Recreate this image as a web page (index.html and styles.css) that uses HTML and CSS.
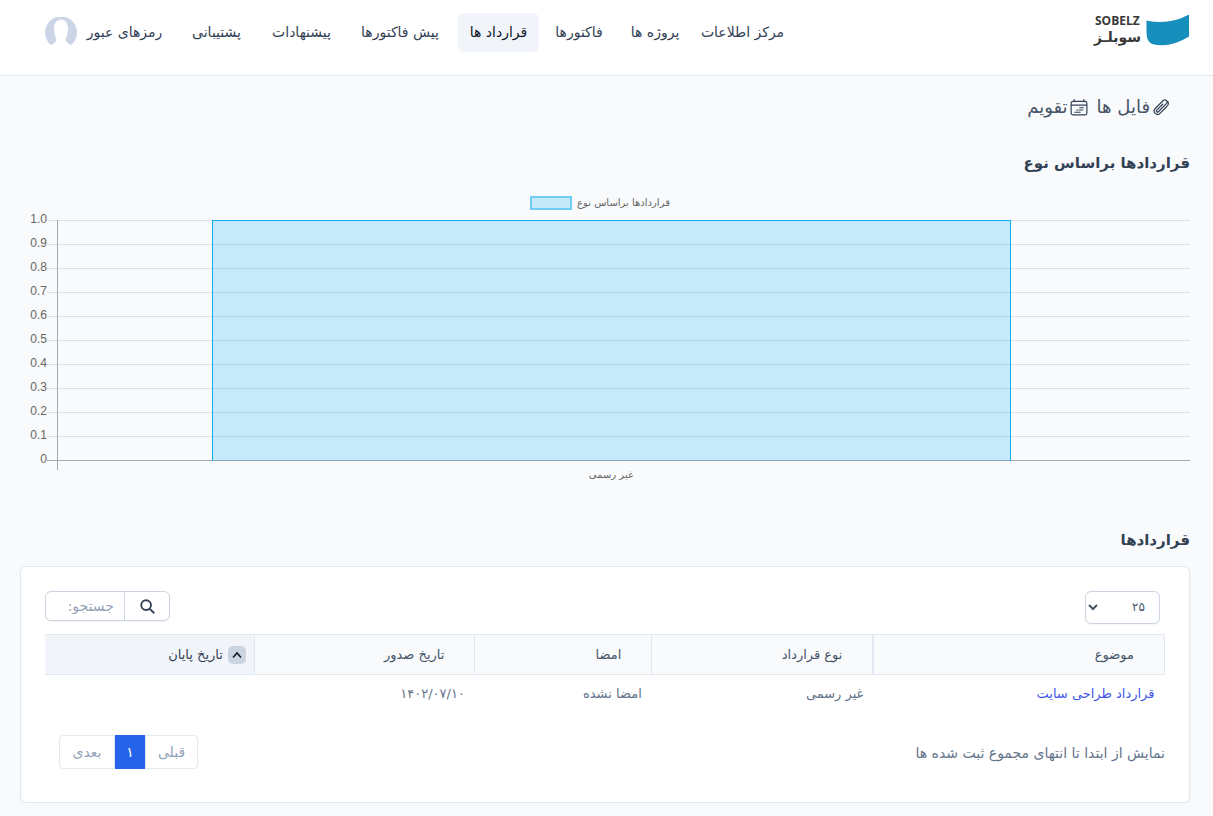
FILE: index.html
```html
<!DOCTYPE html>
<html lang="fa" dir="rtl">
<head>
<meta charset="utf-8">
<meta name="viewport" content="width=device-width, initial-scale=1">
<title>قراردادها</title>
<link rel="stylesheet" href="styles.css">
</head>
<body>
<header class="topbar">
  <a class="logo" href="#" aria-label="SOBELZ">
    <svg class="logo-mark" viewBox="0 0 44 32" aria-hidden="true"><path d="M.5 7Q23 12 43 1V23Q24 35 6 30.500Q.5 28 .5 19Z" fill="#178fbd"/></svg>
    <span class="logo-text"><span class="logo-en">SOBELZ</span><span class="logo-fa">سوبلـز</span></span>
  </a>
  <nav class="nav">
    <a class="nav-link w-95" href="#">مرکز اطلاعات</a>
    <a class="nav-link w-72" href="#">پروژه ها</a>
    <a class="nav-link w-72" href="#">فاکتورها</a>
    <a class="nav-link w-81 active" href="#">قرارداد ها</a>
    <a class="nav-link w-108" href="#">پیش فاکتورها</a>
    <a class="nav-link w-81" href="#">پیشنهادات</a>
    <a class="nav-link w-81" href="#">پشتیبانی</a>
    <a class="nav-link w-95" href="#">رمزهای عبور</a>
  </nav>
  <button class="avatar" aria-label="حساب کاربری">
    <svg viewBox="0 0 32 32" aria-hidden="true"><path d="M6 28A16 16 0 1 1 26 28Q21 26 20.500 22Q23 18 23 12Q23 7 20 4Q16 1 12 4Q9 6 9 12Q9 18 11.500 22Q11 26 6 28Z" fill="#cbd5e6"/></svg>
  </button>
</header>
<main class="page">
  <div class="quick">
    <a class="quick-link" href="#"><svg viewBox="0 0 24 24" aria-hidden="true"><path d="m18.400 12.700-7.700 7.700a4.500 4.500 0 0 1-6.400-6.400L15.300 3.100a3 3 0 0 1 4.200 4.200L8.600 18.300a1.500 1.500 0 0 1-2.200-2.100l7.900-7.900m4.100 4.400 2.300-2.400a5 5 0 0 0 .4-5.500"/></svg>فایل ها</a>
    <a class="quick-link" href="#"><svg viewBox="0 0 24 24" aria-hidden="true"><path d="M5.500 2v3M18.500 2v3M1.500 9.500h21M4 4.500h16A2.500 2.500 0 0 1 22.500 7v13a2.500 2.500 0 0 1-2.500 2.500H4A2.500 2.500 0 0 1 1.500 20V7A2.500 2.500 0 0 1 4 4.500ZM13 13h5M9 16h1m2 0h5M6.500 19h7"/></svg>تقویم</a>
  </div>
  <h2 class="title">قراردادها براساس نوع</h2>
  <figure class="chart" dir="ltr">
    <figcaption class="legend"><span class="swatch"></span><span dir="rtl">قراردادها براساس نوع</span></figcaption>
    <div class="plot">
      <div class="ticks"><span>1.0</span><span>0.9</span><span>0.8</span><span>0.7</span><span>0.6</span><span>0.5</span><span>0.4</span><span>0.3</span><span>0.2</span><span>0.1</span><span>0</span></div>
      <div class="lines"><i></i><i></i><i></i><i></i><i></i><i></i><i></i><i></i><i></i><i></i><i class="base"></i></div>
      <div class="area"><div class="bar"></div></div>
    </div>
    <div class="category" dir="rtl">غیر رسمی</div>
  </figure>
  <h2 class="title">قراردادها</h2>
  <section class="card">
    <div class="tools">
      <select class="length" aria-label="تعداد ردیف"><option>۲۵</option></select>
      <div class="search">
        <button class="search-btn" aria-label="جستجو"><svg viewBox="0 0 16 16" aria-hidden="true"><circle cx="6.500" cy="6.500" r="5.200"/><path d="m10.200 10.200 5 5"/></svg></button>
        <input class="search-input" type="search" placeholder="جستجو:" aria-label="جستجو">
      </div>
    </div>
    <table class="table">
      <thead><tr><th class="c-subject">موضوع</th><th class="c-type">نوع قرارداد</th><th class="c-sign">امضا</th><th class="c-date">تاریخ صدور</th><th class="sorted"><span class="sort-label"><svg class="sort" viewBox="0 0 18 18" aria-hidden="true"><rect width="18" height="18" rx="5" fill="#cbd5e1"/><path d="m5 11.500 4-4.500 4 4.500" fill="none" stroke="#0f172a" stroke-width="1.600"/></svg>تاریخ پایان</span></th></tr></thead>
      <tbody><tr><td><a class="link" href="#">قرارداد طراحی سایت</a></td><td>غیر رسمی</td><td>امضا نشده</td><td>۱۴۰۲/۰۷/۱۰</td><td></td></tr></tbody>
    </table>
    <div class="foot">
      <p class="info">نمایش از ابتدا تا انتهای مجموع ثبت شده ها</p>
      <div class="pager"><button class="page-btn">قبلی</button><button class="page-btn current">۱</button><button class="page-btn">بعدی</button></div>
    </div>
  </section>
</main>
</body>
</html>
```
FILE: styles.css
```css
* { box-sizing: border-box; }
body { margin: 0; background: #f8fafc; color: #475569; font: 13px/20px "DejaVu Sans", sans-serif; }
a { color: inherit; text-decoration: none; }
button, input, select { font: inherit; color: inherit; margin: 0; }
.topbar { display: flex; align-items: flex-start; height: 76px; padding: 13px 23px 0 45px; background: #fff; border-bottom: 1px solid #e2e8f0; }
.logo { display: flex; gap: 5px; align-items: flex-start; margin-inline-end: auto; }
.logo-mark { width: 44px; height: 33px; }
.logo-text { display: flex; flex-direction: column; width: 46px; color: #383838; font-weight: 700; text-align: right; white-space: nowrap; }
.logo-en { font: 700 12px/16px "Open Sans", sans-serif; direction: ltr; text-align: left; }
.logo-fa { font-size: 14px; line-height: 16px; }
.nav { display: flex; gap: 4px; font-size: 14px; }
.nav-link { padding: 9px 0 10px; border-radius: 6px; text-align: center; white-space: nowrap; color: #334155; }
.nav-link.active { background: #f1f5f9; color: #0f172a; }
.w-72 { width: 72px; }
.w-81 { width: 81px; }
.w-95 { width: 95px; }
.w-108 { width: 108px; }
.avatar { width: 32px; height: 32px; margin-top: 4px; padding: 0; border: 0; background: none; }
.avatar svg { display: block; }
.page { padding: 18px 23px 0 20px; }
.quick { display: flex; gap: 9px; padding-inline-start: 20px; font-size: 18px; line-height: 26px; }
.quick-link { display: flex; align-items: center; gap: 2px; }
.quick-link svg { width: 18px; height: 18px; fill: none; stroke: #334155; stroke-width: 1.600; stroke-linecap: round; }
.title { margin: 29px 0 0; color: #334155; font-size: 15px; font-weight: 700; line-height: 28px; }
.chart { margin: 18px 0 43px; color: #666; font-size: 10px; }
.legend { display: flex; justify-content: center; align-items: center; gap: 5px; height: 16px; margin-right: 10px; }
.swatch { width: 42px; height: 14px; border: 2px solid #71cdf5; background: #c6e9f9; }
.plot { display: grid; grid-template-columns: 27px 10px 1fr; margin-top: 9px; }
.ticks { grid-area: 1 / 1; margin-top: -13px; font: 12px/24px "Liberation Sans", Arial, sans-serif; text-align: right; }
.ticks span { display: block; }
.lines { grid-area: 1 / 2 / 2 / 4; }
.lines i { display: block; height: 24px; border-top: 1px solid #dfe1e3; }
.lines .base { height: 1px; border-color: #a5a7a8; }
.area { grid-area: 1 / 3; height: 250px; padding: 0 15.800% 9px 13.600%; border-left: 1px solid #a5a7a8; }
.bar { height: 100%; border: solid #0caeef; border-width: 1px 1px 0; background: rgba(3, 169, 244, .2); }
.category { padding-left: 12px; line-height: 16px; text-align: center; margin-top: -4px; }
.card { margin-top: 12px; padding: 24px; background: #fff; border: 1px solid #e2e8f0; border-radius: 6px; box-shadow: 0 1px 2px rgba(0, 0, 0, .05); }
.tools { display: flex; justify-content: space-between; align-items: flex-start; padding-inline-start: 5px; }
.length { width: 75px; height: 33px; padding: 0 10px 2px 4px; border: 1px solid #cbd5e1; border-radius: 6px; background: #fff; font-size: 12px; box-shadow: 0 1px 2px rgba(0, 0, 0, .05); }
.search { display: flex; width: 125px; height: 30px; border: 1px solid #cbd5e1; border-radius: 6px; background: #fff; box-shadow: 0 1px 2px rgba(0, 0, 0, .05); }
.search-btn { width: 45px; padding: 0; border: 0; border-left: 1px solid #cbd5e1; background: none; }
.search-btn svg { display: block; width: 15px; height: 15px; margin: 0 auto; fill: none; stroke: #334155; stroke-width: 2; }
.search-input { flex: 1; min-width: 0; padding: 0 10px 0 0; border: 0; background: none; outline: 0; font-size: 14px; appearance: none; }
.search-input::-webkit-search-cancel-button { display: none; }
.search-input::placeholder { color: #94a3b8; opacity: 1; }
.table { width: 100%; margin-top: 10px; border-collapse: collapse; table-layout: fixed; }
th { height: 40px; padding: 0 30px; border: 1px solid #e2e8f0; background: #f8fafc; color: #475569; font-weight: 400; text-align: right; }
th.sorted { padding: 0 8px; border-left: 0; background: #f1f5f9; color: #334155; }
.c-subject { width: 26%; border-left-width: 2px; }
.c-type { width: 19.800%; }
.c-sign { width: 15.800%; }
.c-date { width: 19.700%; }
.sort-label { display: flex; align-items: center; gap: 5px; }
.sort { width: 18px; height: 18px; }
td { height: 38px; padding: 0 10px; color: #64748b; text-align: right; }
.link { color: #4255e8; }
.foot { display: flex; justify-content: space-between; align-items: flex-start; padding: 22px 0 9px 14px; font-size: 14px; }
.info { margin: 8px 0 0; color: #64748b; }
.pager { display: flex; }
.page-btn { height: 34px; padding: 0 10px; border: 1px solid #e2e8f0; background: #fff; color: #94a3b8; }
.page-btn:first-child { width: 53px; border-radius: 0 4px 4px 0; }
.page-btn:last-child { width: 56px; border-radius: 4px 0 0 4px; }
.page-btn.current { width: 30px; padding: 0; border-color: #2563eb; background: #2563eb; color: #fff; }
```
